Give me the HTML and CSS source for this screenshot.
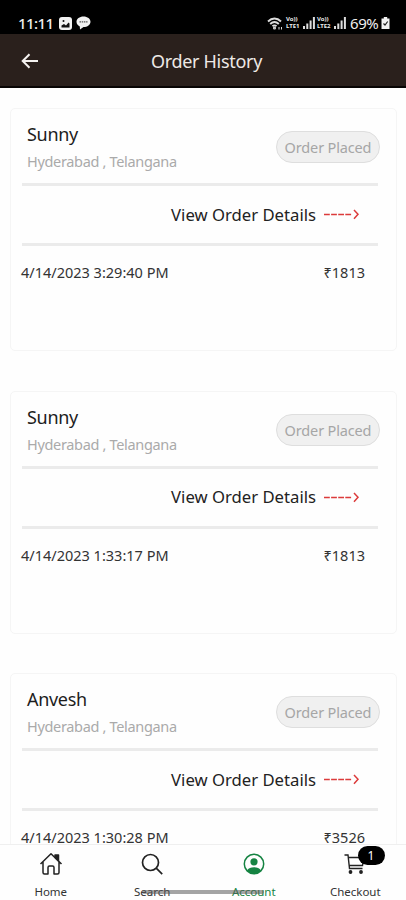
FILE: index.html
```html
<!DOCTYPE html>
<html lang="en">
<head>
    <meta charset="UTF-8">
    <meta name="viewport" content="width=device-width, initial-scale=1.0">
    <title>Order History</title>
    <link rel="stylesheet" href="styles.css">
</head>
<body>
    <div class="screen">
        <div class="status-bar">
            <span class="time">11:11</span>
            <svg class="status-photo" width="13" height="13" viewBox="0 0 13 13">
                <rect width="13" height="13" rx="3" fill="#f2f2f2"/>
                <path d="M2.500 10.500V8.500L5 7l2 1.500L9.500 5.500l1 1v4z" fill="#111"/>
                <circle cx="4.500" cy="4" r="1" fill="#111"/>
            </svg>
            <svg class="status-chat" width="15" height="14" viewBox="0 0 15 14">
                <path d="M7.500 0.500c4 0 7 2.300 7 5.300s-3 5.300-7 5.300L4 13.500 3.800 10.400C1.800 9.500.5 7.800.5 5.800.5 2.800 3.500.5 7.500.5z" fill="#f2f2f2"/>
                <path d="M3.500 5.800h8" stroke="#555" stroke-width="1.300" stroke-dasharray="1.500 .7"/>
            </svg>
            <div class="status-right">
                <svg class="wifi" width="17" height="13" viewBox="0 0 17 13" fill="none" stroke="#ddd" stroke-width="1.900">
                    <path d="M1 4.500C5 .5 10 .5 14 4.500M3.200 7C6 4.300 9 4.300 11.800 7M5.500 9.300c1.300-1.200 2.700-1.200 4 0"/>
                    <circle cx="7.500" cy="11" r=".6"/>
                    <path d="M12 10v2.500M14.500 10v2.500" stroke-width="1"/>
                </svg>
                <span class="lte"><b>Vo))</b><b>LTE1</b></span>
                <svg class="signal" width="12" height="12" viewBox="0 0 12 12" fill="#ddd">
                    <path d="M0 9h2v3H0zM3.300 6.500h2V12h-2zM6.600 3.500h2V12h-2zM9.900 0h2v12h-2z"/>
                </svg>
                <span class="lte"><b>Vo))</b><b>LTE2</b></span>
                <svg class="signal signal-two" width="12" height="12" viewBox="0 0 12 12" fill="#ddd">
                    <path d="M0 9h2v3H0zM3.300 6.500h2V12h-2zM6.600 3.500h2V12h-2zM9.900 0h2v12h-2z"/>
                </svg>
                <span class="battery">69%</span>
                <svg width="9" height="12" viewBox="0 0 9 12">
                    <path d="M2.800 0h3.400v1.500H8.500V12H.5V1.500h2.300z" fill="#f2f2f2"/>
                    <path d="M2.500 6.500L4 8l2.700-3.500" fill="none" stroke="#222" stroke-width="1.200"/>
                </svg>
            </div>
        </div>

        <header class="app-bar">
            <svg class="back" width="18" height="16" viewBox="0 0 18 16" fill="none" stroke="#f5f2f0" stroke-width="2">
                <path d="M17 8H2M8.500 1.200L1.700 8l6.800 6.800"/>
            </svg>
            <h1>Order History</h1>
        </header>

        <main class="orders">
            <section class="order">
                <div class="order-head">
                    <div>
                        <h2>Sunny</h2>
                        <p class="place">Hyderabad , Telangana</p>
                    </div>
                    <span class="badge"><span>Order Placed</span></span>
                </div>
                <div class="details">
                    <span class="details-label">View Order Details</span>
                    <svg class="arrow" width="36" height="12" viewBox="0 0 36 12"><path d="M0 6.500h28" stroke-dasharray="5.800 1.300"/><path d="M30 2l4 4.300-4 4.500"/></svg>
                </div>
                <div class="order-foot">
                    <span class="date">4/14/2023 3:29:40 PM</span>
                    <span class="price">₹1813</span>
                </div>
            </section>

            <section class="order">
                <div class="order-head">
                    <div>
                        <h2>Sunny</h2>
                        <p class="place">Hyderabad , Telangana</p>
                    </div>
                    <span class="badge"><span>Order Placed</span></span>
                </div>
                <div class="details">
                    <span class="details-label">View Order Details</span>
                    <svg class="arrow" width="36" height="12" viewBox="0 0 36 12"><path d="M0 6.500h28" stroke-dasharray="5.800 1.300"/><path d="M30 2l4 4.300-4 4.500"/></svg>
                </div>
                <div class="order-foot">
                    <span class="date">4/14/2023 1:33:17 PM</span>
                    <span class="price">₹1813</span>
                </div>
            </section>

            <section class="order">
                <div class="order-head">
                    <div>
                        <h2>Anvesh</h2>
                        <p class="place">Hyderabad , Telangana</p>
                    </div>
                    <span class="badge"><span>Order Placed</span></span>
                </div>
                <div class="details">
                    <span class="details-label">View Order Details</span>
                    <svg class="arrow" width="36" height="12" viewBox="0 0 36 12"><path d="M0 6.500h28" stroke-dasharray="5.800 1.300"/><path d="M30 2l4 4.300-4 4.500"/></svg>
                </div>
                <div class="order-foot">
                    <span class="date">4/14/2023 1:30:28 PM</span>
                    <span class="price">₹3526</span>
                </div>
            </section>
        </main>

        <nav class="tabs">
            <div class="tab">
                <svg width="24" height="24" viewBox="0 0 24 24" fill="none" stroke="#222" stroke-width="1.500" stroke-linejoin="round">
                    <path d="M1.500 12L12 1.800 22.500 12M4 10v10.500c0 1 .5 1.500 1.500 1.500H9v-6.500c0-1 .5-1.500 1.500-1.500h3c1 0 1.500.5 1.500 1.500V22h3.500c1 0 1.500-.5 1.500-1.500V10"/>
                    <path d="M16 3h3.500v6L16 5.500z" fill="#222"/>
                </svg>
                <span>Home</span>
            </div>
            <div class="tab">
                <svg width="24" height="24" viewBox="0 0 24 24" fill="none" stroke="#222" stroke-width="1.700">
                    <circle cx="10.500" cy="10.500" r="8"/>
                    <path d="M16.200 16.200l6 6"/>
                </svg>
                <span>Search</span>
            </div>
            <div class="tab active">
                <svg width="24" height="24" viewBox="0 0 24 24">
                    <circle cx="12" cy="12" r="9.700" fill="none" stroke="#158342" stroke-width="1.500"/>
                    <circle cx="12" cy="9.800" r="3.600" fill="#158342"/>
                    <path d="M5 18.500c1.300-2.200 4-3.300 7-3.300s5.700 1.100 7 3.300c-1.700 2-4.200 3.200-7 3.200s-5.300-1.200-7-3.200z" fill="#158342"/>
                </svg>
                <span>Account</span>
            </div>
            <div class="tab">
                <svg width="24" height="24" viewBox="0 0 24 24" fill="none" stroke="#222" stroke-width="1.400">
                    <path d="M1.500 3H5l1.500 13.500h13M5.500 5.500H21L19.500 13.500H6.500"/>
                    <circle cx="7.500" cy="20" r="1.200" fill="#222"/>
                    <circle cx="18" cy="20" r="1.200" fill="#222"/>
                </svg>
                <em class="count">1</em>
                <span>Checkout</span>
            </div>
            <i class="gesture"></i>
        </nav>
    </div>
</body>
</html>
```
FILE: styles.css
```css
* { box-sizing: border-box; }
body { margin: 0; background: #fefefe; color: #222; font-family: "Noto Sans", sans-serif; }
h1, h2, p { margin: 0; font-weight: 400; }
.screen { height: 900px; display: flex; flex-direction: column; overflow: hidden; white-space: nowrap; }

.status-bar { height: 34px; flex: none; display: flex; align-items: center; background: #000; color: #eee; padding: 12px 16px 0 18px; }
.time { width: 40px; font-size: 15px; line-height: 20px; font-weight: 500; letter-spacing: -0.6px; }
.status-photo { margin-left: 1px; }
.status-chat { margin-left: 4px; }
.status-right { margin-left: auto; display: flex; align-items: center; }
.lte { width: 15px; margin-left: 2px; font-size: 6px; line-height: 7px; letter-spacing: 0; }
.lte b { display: block; height: 7px; }
.signal { margin-left: 2px; }
.signal-two { margin-left: 2px; }
.battery { width: 31px; margin-left: 4px; font-size: 15px; line-height: 20px; letter-spacing: -0.4px; }

.app-bar { height: 54px; flex: none; display: grid; grid-template-columns: 1fr auto 1fr; align-items: center; padding: 2px 14px 0 21px; background: #2a201c; border-bottom: 2px solid #080504; color: #eee9e6; }
.app-bar h1 { font-size: 18px; letter-spacing: -0.3px; }

.orders { flex: 1; min-height: 0; overflow: hidden; padding: 20px 9px 0 10px; display: flex; flex-direction: column; gap: 39.5px; }
.order { height: 243px; flex: none; padding: 0 18px 0 11px; border: 1px solid #f5f5f5; border-radius: 5px; }
.order-head { height: 77px; display: flex; justify-content: space-between; padding: 12px 0 0 5px; border-bottom: 3px solid #ebebeb; }
.order-head h2 { font-size: 18px; line-height: 26px; letter-spacing: -0.3px; color: #1d1d1d; }
.place { font-size: 14.5px; line-height: 20px; margin-top: 4px; letter-spacing: -0.33px; color: #aaa; }
.badge { width: 104px; height: 32px; margin: 10px -2px 0 0; display: flex; align-items: center; justify-content: center; border: 1px solid #dedede; border-radius: 16px; background: #f0f0f0; color: #a6a6a6; font-size: 14.5px; letter-spacing: -0.15px; }
.details { height: 60px; display: flex; align-items: center; justify-content: flex-end; padding: 0 18px 1px 0; border-bottom: 3px solid #ebebeb; font-size: 16.7px; }
.arrow { margin-left: 8px; fill: none; stroke: #dc3b3b; stroke-width: 1.5; }
.order-foot { display: flex; justify-content: space-between; margin-left: -1px; padding: 15px 13px 0 0; font-size: 14.5px; line-height: 23px; color: #333; }

.tabs { height: 56px; flex: none; position: relative; display: grid; grid-template-columns: repeat(4, 1fr); background: #fefefe; border-top: 1px solid #efefef; }
.tab { position: relative; display: flex; flex-direction: column; align-items: center; padding-top: 7px; font-size: 11.5px; line-height: 16px; color: #333; }
.tab span { margin-top: 8px; }
.tab.active { color: #158342; }
.count { position: absolute; left: 53px; top: 1px; width: 27px; height: 19px; border-radius: 10px; background: #000; color: #fff; font-size: 12px; line-height: 19px; font-style: normal; text-align: center; }
.gesture { position: absolute; left: 142px; top: 45px; width: 122px; height: 4px; border-radius: 2px; background: rgba(90, 90, 90, 0.55); }
```
